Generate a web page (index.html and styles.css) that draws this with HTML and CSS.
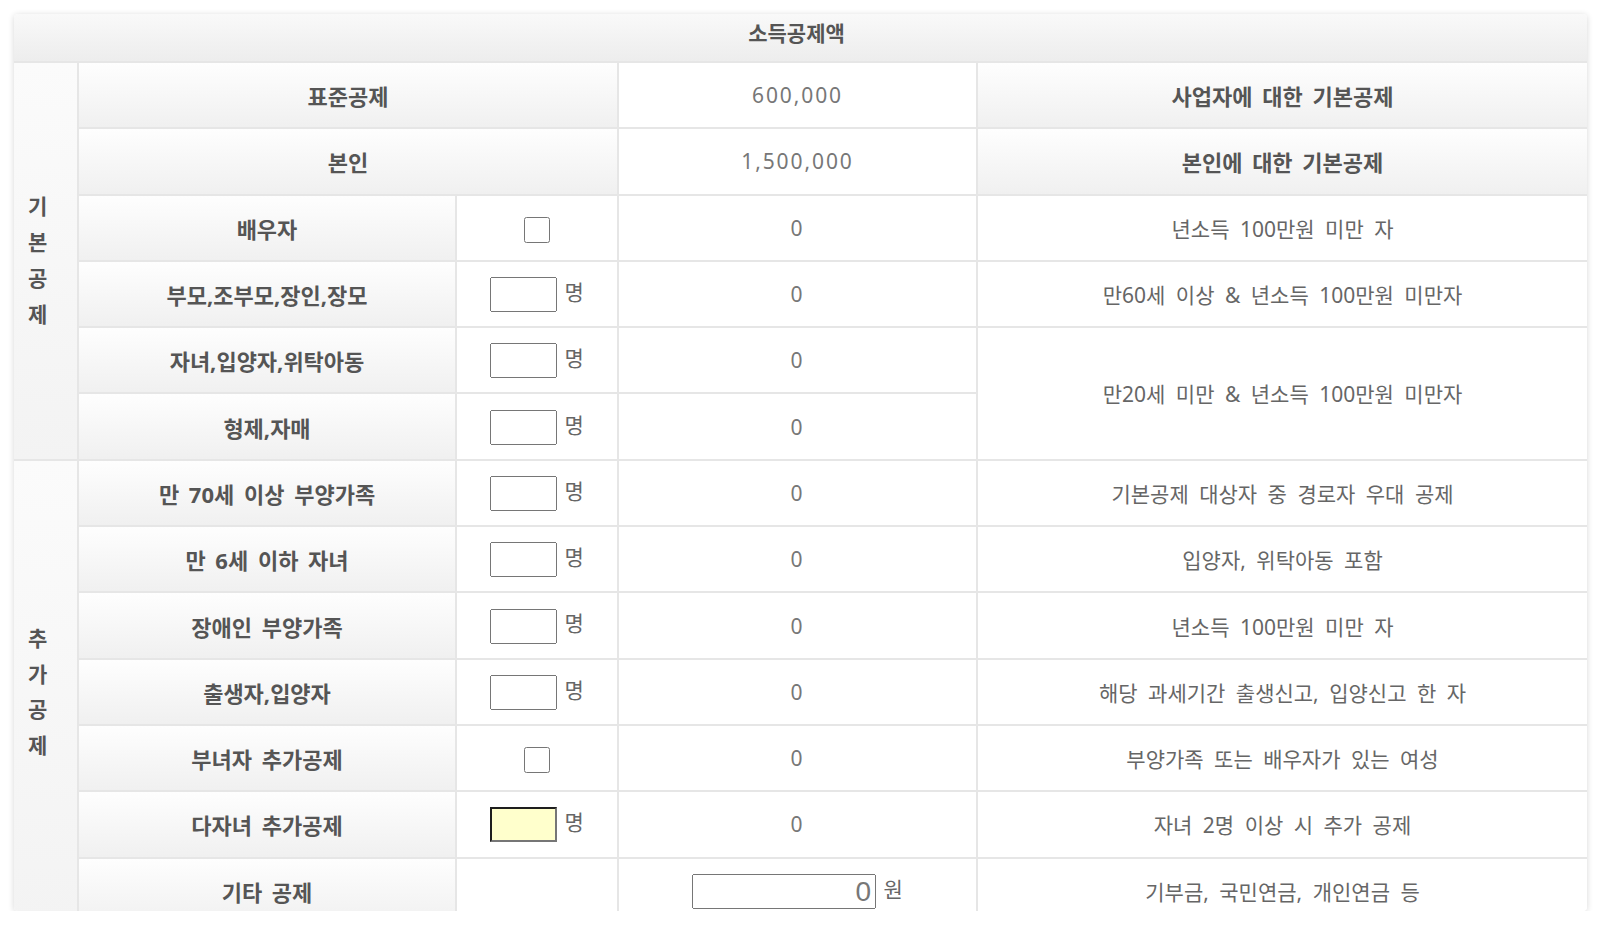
FILE: index.html
```html
<!DOCTYPE html>
<html lang="ko">
<head>
<meta charset="utf-8">
<title>소득공제액</title>
<link rel="stylesheet" href="styles.css">
</head>
<body>
<div class="panel">
  <table class="tbl">
    <colgroup>
      <col class="c1"><col class="c2"><col class="c3"><col class="c4"><col class="c5">
    </colgroup>
    <thead>
      <tr class="head-row"><th colspan="5" class="head">소득공제액</th></tr>
    </thead>
    <tbody>
      <tr>
        <th rowspan="6" class="group">기<br>본<br>공<br>제</th>
        <th colspan="2" class="lbl">표준공제</th>
        <td class="val">600,000</td>
        <th class="lbl">사업자에 대한 기본공제</th>
      </tr>
      <tr>
        <th colspan="2" class="lbl">본인</th>
        <td class="val">1,500,000</td>
        <th class="lbl">본인에 대한 기본공제</th>
      </tr>
      <tr>
        <th class="lbl">배우자</th>
        <td class="inp"><input type="checkbox" class="chk"></td>
        <td class="val">0</td>
        <td class="desc">년소득 100만원 미만 자</td>
      </tr>
      <tr>
        <th class="lbl">부모,조부모,장인,장모</th>
        <td class="inp"><input type="text" class="cnt"> <span class="unit">명</span></td>
        <td class="val">0</td>
        <td class="desc">만60세 이상 &amp; 년소득 100만원 미만자</td>
      </tr>
      <tr>
        <th class="lbl">자녀,입양자,위탁아동</th>
        <td class="inp"><input type="text" class="cnt"> <span class="unit">명</span></td>
        <td class="val">0</td>
        <td rowspan="2" class="desc">만20세 미만 &amp; 년소득 100만원 미만자</td>
      </tr>
      <tr>
        <th class="lbl">형제,자매</th>
        <td class="inp"><input type="text" class="cnt"> <span class="unit">명</span></td>
        <td class="val">0</td>
      </tr>
      <tr>
        <th rowspan="7" class="group">추<br>가<br>공<br>제</th>
        <th class="lbl">만 70세 이상 부양가족</th>
        <td class="inp"><input type="text" class="cnt"> <span class="unit">명</span></td>
        <td class="val">0</td>
        <td class="desc">기본공제 대상자 중 경로자 우대 공제</td>
      </tr>
      <tr>
        <th class="lbl">만 6세 이하 자녀</th>
        <td class="inp"><input type="text" class="cnt"> <span class="unit">명</span></td>
        <td class="val">0</td>
        <td class="desc">입양자, 위탁아동 포함</td>
      </tr>
      <tr>
        <th class="lbl">장애인 부양가족</th>
        <td class="inp"><input type="text" class="cnt"> <span class="unit">명</span></td>
        <td class="val">0</td>
        <td class="desc">년소득 100만원 미만 자</td>
      </tr>
      <tr>
        <th class="lbl">출생자,입양자</th>
        <td class="inp"><input type="text" class="cnt"> <span class="unit">명</span></td>
        <td class="val">0</td>
        <td class="desc">해당 과세기간 출생신고, 입양신고 한 자</td>
      </tr>
      <tr>
        <th class="lbl">부녀자 추가공제</th>
        <td class="inp"><input type="checkbox" class="chk"></td>
        <td class="val">0</td>
        <td class="desc">부양가족 또는 배우자가 있는 여성</td>
      </tr>
      <tr>
        <th class="lbl">다자녀 추가공제</th>
        <td class="inp"><input type="text" class="cnt cnt-hl"> <span class="unit">명</span></td>
        <td class="val">0</td>
        <td class="desc">자녀 2명 이상 시 추가 공제</td>
      </tr>
      <tr>
        <th class="lbl">기타 공제</th>
        <td class="inp"></td>
        <td class="val val-amt"><input type="text" class="amt" value="0"> <span class="unit">원</span></td>
        <td class="desc">기부금, 국민연금, 개인연금 등</td>
      </tr>
    </tbody>
  </table>
</div>
</body>
</html>
```

FILE: styles.css
```css
html, body {
  margin: 0;
  padding: 0;
  background: #ffffff;
}

body {
  padding: 14px 15px 0 14px;
  font-family: "Noto Sans", "Noto Sans CJK KR", sans-serif;
  color: #666666;
}

.panel {
  width: 1573px;
  height: 897px;
  overflow: hidden;
  border-radius: 4px;
  background: #ffffff;
  box-shadow: 0 1px 6px rgba(0, 0, 0, 0.16);
}

.tbl {
  width: 1573px;
  table-layout: fixed;
  border-collapse: collapse;
  border-style: hidden;
}

.c1 { width: 64px; }
.c2 { width: 378px; }
.c3 { width: 162px; }
.c4 { width: 359px; }
.c5 { width: 610px; }

.tbl th,
.tbl td {
  border: 2px solid #e6e6e6;
  padding: 0;
  text-align: center;
  vertical-align: middle;
}

.tbl tbody tr {
  height: 66.3px;
}

.head-row {
  height: 48px;
}

.tbl .head {
  background: linear-gradient(#f9f9f9, #ededed);
  font-size: 21px;
  font-weight: 700;
  line-height: 30px;
  color: #555555;
  vertical-align: top;
  padding: 4px 8px 0 0;
}

.tbl .group {
  background: linear-gradient(#fbfbfb, #f3f3f3);
  font-size: 21px;
  font-weight: 700;
  line-height: 35.7px;
  color: #555555;
  text-align: left;
  padding-left: 14px;
}

.lbl {
  background: linear-gradient(#fefefe, #f0f0f0);
  font-size: 22px;
  font-weight: 700;
  color: #555555;
  word-spacing: 4px;
}

.val {
  background: #ffffff;
  font-size: 21px;
  color: #777777;
  letter-spacing: 1.9px;
}

.desc {
  background: #ffffff;
  font-size: 21px;
  color: #666666;
  word-spacing: 5px;
}

.inp {
  background: #ffffff;
  font-size: 20px;
}

.unit {
  font-size: 21px;
  color: #666666;
  letter-spacing: 0;
}

.chk {
  width: 26px;
  height: 26px;
  margin: 3px 0 0 0;
  vertical-align: middle;
}

.cnt {
  width: 67px;
  height: 35px;
  box-sizing: border-box;
  font-size: 20px;
  vertical-align: middle;
  margin: 0 2px 0 0;
}

.cnt-hl {
  background: #ffffcc;
  border-width: 2px;
  border-style: solid;
  border-color: #1e1e1e #767676 #767676 #1e1e1e;
}

.val-amt {
  letter-spacing: 0;
}

.amt {
  width: 184px;
  height: 35px;
  box-sizing: border-box;
  font-family: "Liberation Sans", sans-serif;
  font-size: 28px;
  color: #777777;
  text-align: right;
  padding: 0 3px 0 2px;
  vertical-align: middle;
  margin: 0 2px 0 0;
}
```
